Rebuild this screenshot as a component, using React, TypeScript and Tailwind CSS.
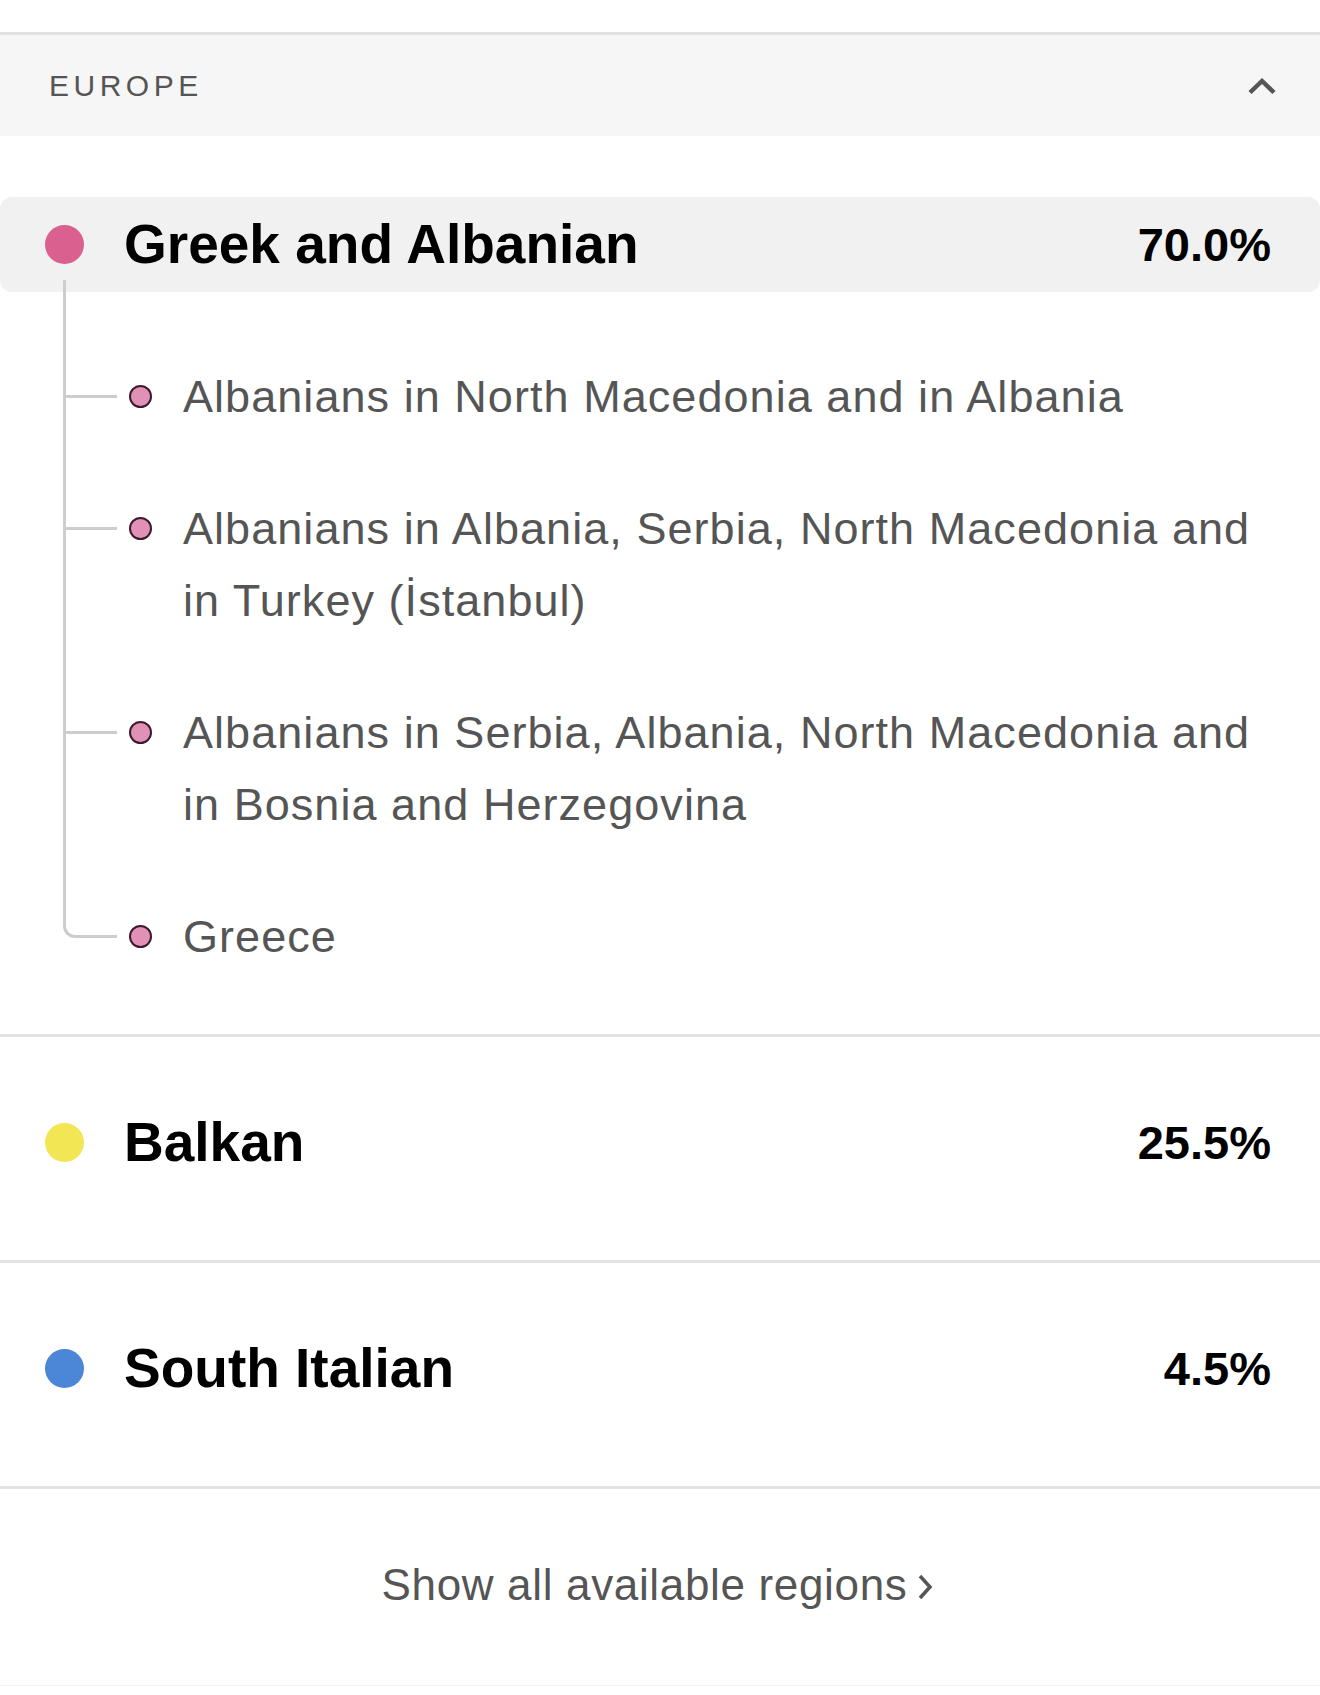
const FONT = { fontFamily: '"Liberation Sans", Arial, sans-serif' };

type Sub = { label: string };

const subs: Sub[] = [
  { label: "Albanians in North Macedonia and in Albania" },
  { label: "Albanians in Albania, Serbia, North Macedonia and in Turkey (İstanbul)" },
  { label: "Albanians in Serbia, Albania, North Macedonia and in Bosnia and Herzegovina" },
  { label: "Greece" },
];

function Dot({ color }: { color: string }) {
  return <span className={`h-[39px] w-[39px] shrink-0 rounded-full ${color}`} />;
}

function RegionRow({ name, pct, color }: { name: string; pct: string; color: string }) {
  return (
    <div className="flex h-[226px] items-center border-t-[3px] border-[#e3e3e3] pb-[12px] pl-[45px] pr-[49px]">
      <Dot color={color} />
      <span className="ml-[40px] text-[55px] font-bold leading-none text-black">{name}</span>
      <span className="ml-auto text-[47px] font-bold leading-none text-black">{pct}</span>
    </div>
  );
}

export default function App() {
  return (
    <div className="min-h-screen w-full bg-white" style={FONT}>
      <div className="h-[32px]" />

      {/* section header */}
      <div className="flex h-[104px] items-center justify-between border-t-[3px] border-[#e0e0e0] bg-[#f6f6f6] pl-[49px] pr-[43px]">
        <span className="text-[30px] leading-none tracking-[0.15em] text-[#555]">EUROPE</span>
        <svg width="30" height="18" viewBox="0 0 30 18" fill="none">
          <path d="M3 15.5 L15 4 L27 15.5" stroke="#555" strokeWidth="4.5" />
        </svg>
      </div>

      <div className="h-[61px]" />

      {/* highlighted region */}
      <div className="flex h-[95px] items-center rounded-[12px] bg-[#f1f1f1] pl-[45px] pr-[49px]">
        <Dot color="bg-[#d9608f]" />
        <span className="ml-[40px] text-[55px] font-bold leading-none text-black">Greek and Albanian</span>
        <span className="ml-auto text-[47px] font-bold leading-none text-black">70.0%</span>
      </div>

      {/* sub regions tree */}
      <div className="relative flex flex-col gap-[60px] pb-[61px] pt-[69px]">
        <div className="absolute left-[63px] top-[-12px] bottom-[109px] w-[3px] bg-[#cdcdcd]" />
        {subs.map((s, i) => {
          const last = i === subs.length - 1;
          return (
            <div key={s.label} className="relative flex items-start pl-[129px] pr-[49px]">
              {last ? (
                <div className="absolute left-[63px] top-[22px] h-[15px] w-[54px] rounded-bl-[12px] border-b-[3px] border-l-[3px] border-[#cdcdcd]" />
              ) : (
                <div className="absolute left-[63px] top-[34px] h-[3px] w-[54px] bg-[#cdcdcd]" />
              )}
              <span className="mt-[24px] h-[23px] w-[23px] shrink-0 rounded-full border-2 border-[#3b1a2c] bg-[#e291b6]" />
              <span className="ml-[31px] text-[45px] leading-[72px] tracking-[1.05px] text-[#555]">{s.label}</span>
            </div>
          );
        })}
      </div>

      <RegionRow name="Balkan" pct="25.5%" color="bg-[#f3e655]" />
      <RegionRow name="South Italian" pct="4.5%" color="bg-[#4b87d6]" />

      {/* footer link */}
      <div className="flex h-[199px] items-center justify-center border-t-[3px] border-[#e3e3e3] pb-[4px] pr-[4px]">
        <span className="text-[44px] leading-none tracking-[0.015em] text-[#555]">Show all available regions</span>
        <svg className="ml-[9px] mt-[4px]" width="18" height="28" viewBox="0 0 18 28" fill="none">
          <path d="M4 3 L14 14 L4 25" stroke="#555" strokeWidth="3.5" />
        </svg>
      </div>
      <div className="h-[20px] border-t border-[#f2f2f2]" />
    </div>
  );
}
